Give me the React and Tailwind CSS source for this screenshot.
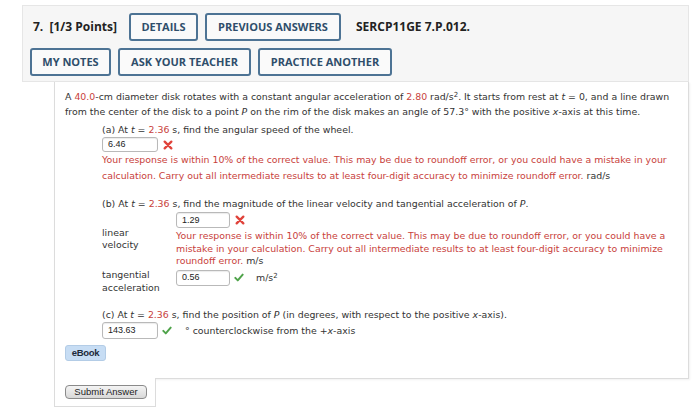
import React from 'react';

const Wrong = () => (
  <svg width="10" height="10" viewBox="0 0 12 12" className="shrink-0">
    <path d="M2 2 L10 10 M10 2 L2 10" stroke="#e0433b" strokeWidth="2.8" strokeLinecap="round" />
  </svg>
);

const Right = () => (
  <svg width="10" height="9" viewBox="0 0 12 11" className="shrink-0">
    <path d="M1.5 6 L4.5 9 L10.5 2" fill="none" stroke="#4fa34a" strokeWidth="2.4" strokeLinecap="round" strokeLinejoin="round" />
  </svg>
);

const Answer = ({ value, w = 'w-[56px]', h = 'h-[16px]' }) => (
  <div className={`${w} ${h} shrink-0 border border-[#b9b9b9] rounded-[3px] bg-white flex items-center px-[5px] text-[9px] text-[#222] font-['Liberation_Sans',Arial,sans-serif] shadow-[inset_0_1px_1px_rgba(0,0,0,0.08)]`}>
    {value}
  </div>
);

const Btn = ({ children, w }) => (
  <div className={`${w} shrink-0 h-[28px] border-2 border-[#4d7394] rounded-[3px] bg-[#fafafa] flex items-center justify-center text-[11px] font-bold text-[#2f4e6b]`}>
    {children}
  </div>
);

const Red = ({ children }) => <span className="text-[#c8413b]">{children}</span>;

export default function App() {
  return (
    <div className="w-[700px] h-[420px] bg-white overflow-hidden font-['DejaVu_Sans',Verdana,sans-serif] text-[#333]">
      <div className="ml-[22px] mt-[5px] w-[667px]">
        {/* header */}
        <div className="bg-[#f6f6f6] border border-[#e6e6e6] h-[77px] pt-[7px] pl-[7px] font-['Open_Sans',sans-serif]">
          <div className="flex items-center gap-[7px]">
            <div className="w-[92px] shrink-0 pl-[3px] text-[12px] font-bold text-[#222] whitespace-nowrap">
              7.&nbsp; [1/3 Points]
            </div>
            <Btn w="w-[69px]">DETAILS</Btn>
            <Btn w="w-[136px]">PREVIOUS ANSWERS</Btn>
            <div className="ml-[8px] text-[12px] font-bold text-[#222]">SERCP11GE 7.P.012.</div>
          </div>
          <div className="flex items-center gap-[7px] mt-[7px]">
            <Btn w="w-[81px]">MY NOTES</Btn>
            <Btn w="w-[133px]">ASK YOUR TEACHER</Btn>
            <Btn w="w-[134px]">PRACTICE ANOTHER</Btn>
          </div>
        </div>

        {/* question */}
        <div className="ml-[32px]">
          <div className="h-[297px] border-l border-r border-b border-[#dcdcdc] shadow-[1px_1px_2px_rgba(0,0,0,0.06)] pl-[10px] pt-[7px] text-[9.4px] leading-[15px]">
            <div className="whitespace-nowrap">
              A <Red>40.0</Red>-cm diameter disk rotates with a constant angular acceleration of <Red>2.80</Red> rad/s<sup className="text-[7px]">2</sup>. It starts from rest at <i>t</i> = 0, and a line drawn
              <br />
              from the center of the disk to a point <i>P</i> on the rim of the disk makes an angle of 57.3° with the positive <i>x</i>-axis at this time.
            </div>

            <div className="ml-[37px] mt-[3px]">
              <div>(a) At <i>t</i> = <Red>2.36</Red> s, find the angular speed of the wheel.</div>
              <div className="flex items-center gap-[5px]">
                <Answer value="6.46" h="h-[15px]" />
                <Wrong />
              </div>
              <div className="text-[#c8413b] leading-[16px] whitespace-nowrap">
                Your response is within 10% of the correct value. This may be due to roundoff error, or you could have a mistake in your
                <br />
                calculation. Carry out all intermediate results to at least four-digit accuracy to minimize roundoff error. <span className="text-[#333]">rad/s</span>
              </div>

              <div className="mt-[12px]">(b) At <i>t</i> = <Red>2.36</Red> s, find the magnitude of the linear velocity and tangential acceleration of <i>P</i>.</div>
              <div className="flex">
                <div className="w-[74px] shrink-0 pt-[16px] leading-[12px]">linear<br />velocity</div>
                <div className="pt-[1px]">
                  <div className="flex items-center gap-[5px]">
                    <Answer value="1.29" w="w-[54px]" />
                    <Wrong />
                  </div>
                  <div className="text-[#c8413b] leading-[12.5px] mt-[2px] whitespace-nowrap">
                    Your response is within 10% of the correct value. This may be due to roundoff error, or you could have a
                    <br />
                    mistake in your calculation. Carry out all intermediate results to at least four-digit accuracy to minimize
                    <br />
                    roundoff error. <span className="text-[#333]">m/s</span>
                  </div>
                </div>
              </div>
              <div className="flex items-start">
                <div className="w-[74px] shrink-0 leading-[13px]">tangential<br />acceleration</div>
                <div className="flex items-center gap-[4px] mt-[2px]">
                  <Answer value="0.56" w="w-[54px]" />
                  <Right />
                  <span className="ml-[8px]">m/s<sup className="text-[7px]">2</sup></span>
                </div>
              </div>

              <div className="mt-[13px]">(c) At <i>t</i> = <Red>2.36</Red> s, find the position of <i>P</i> (in degrees, with respect to the positive <i>x</i>-axis).</div>
              <div className="flex items-center gap-[4px]">
                <Answer value="143.63" h="h-[17px]" />
                <Right />
                <span className="ml-[9px]">° counterclockwise from the +<i>x</i>-axis</span>
              </div>
            </div>

            <div className="mt-[6px] w-[41px] h-[16px] rounded-[3px] bg-[#c7ddf4] border border-[#b3cce6] flex items-center justify-center font-['Liberation_Sans',Arial,sans-serif] font-bold text-[9.5px] text-[#1d2a3a] tracking-[-0.3px]">
              eBook
            </div>
          </div>
          <div className="-mt-px w-[102px] h-[29px] bg-white border-l border-r border-b border-[#dcdcdc] flex items-center pl-[10px]">
            <div className="w-[82px] h-[14px] rounded-[4px] border border-[#8a8a8a] bg-gradient-to-b from-[#f4f4f4] to-[#d8d8d8] flex items-center justify-center font-['Liberation_Sans',Arial,sans-serif] text-[9.5px] text-[#222]">
              Submit Answer
            </div>
          </div>
        </div>
      </div>
    </div>
  );
}
